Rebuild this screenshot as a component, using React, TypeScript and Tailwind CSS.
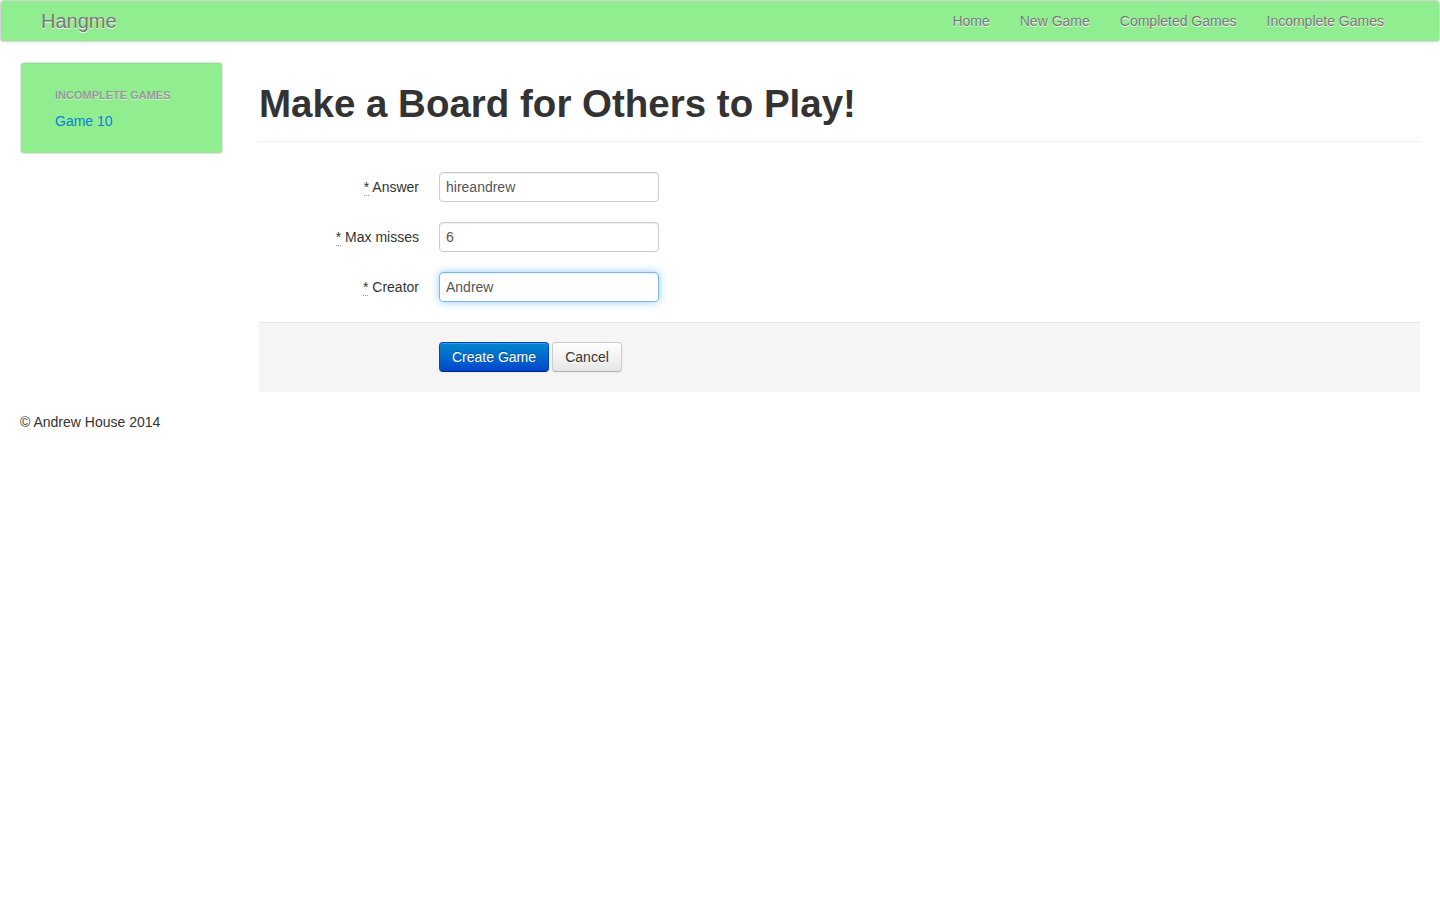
import React from 'react';

const navLinks = ['Home', 'New Game', 'Completed Games', 'Incomplete Games'];

const fields = [
  { label: 'Answer', value: 'hireandrew', focused: false },
  { label: 'Max misses', value: '6', focused: false },
  { label: 'Creator', value: 'Andrew', focused: true },
];

const App = () => {
  return (
    <div className="min-h-screen bg-white text-[14px] leading-[20px] text-[#333]" style={{ fontFamily: '"Liberation Sans", Arial, sans-serif' }}>
      {/* Navbar */}
      <div className="h-[42px] bg-[#90ee90] border border-[#d4d4d4] rounded-[4px] shadow-[0_1px_4px_rgba(0,0,0,0.065)] px-[40px] flex items-center justify-between">
        <a className="text-[20px] leading-[20px] text-[#777] [text-shadow:0_1px_0_#fff] font-light">Hangme</a>
        <ul className="flex">
          {navLinks.map((link) => (
            <li key={link}>
              <a className="block px-[15px] py-[10px] text-[#777] [text-shadow:0_1px_0_#fff]">{link}</a>
            </li>
          ))}
        </ul>
      </div>

      <div className="px-[20px] pt-[20px]">
        <div className="flex items-start">
          {/* Sidebar */}
          <div className="w-[203px] shrink-0 bg-[#90ee90] border border-[#e3e3e3] rounded-[4px] shadow-[inset_0_1px_1px_rgba(0,0,0,0.05)] py-[19px] px-[19px]">
            <ul className="px-[15px]">
              <li className="py-[3px] text-[11px] font-bold uppercase text-[#999] [text-shadow:0_1px_0_rgba(255,255,255,0.5)]">Incomplete Games</li>
              <li className="py-[3px]">
                <a className="text-[#0a80d8]">Game 10</a>
              </li>
            </ul>
          </div>

          {/* Main */}
          <div className="flex-1 ml-[36px]">
            <div className="border-b border-[#eee] pb-[17px] mt-[22px] mb-[30px]">
              <h1 className="text-[38.5px] leading-[40px] font-bold text-[#333]">Make a Board for Others to Play!</h1>
            </div>

            <form>
              {fields.map((f) => (
                <div key={f.label} className="flex mb-[20px]">
                  <label className="w-[160px] pt-[5px] text-right">
                    <abbr className="no-underline border-b border-dotted border-[#999] cursor-help" title="required">*</abbr> {f.label}
                  </label>
                  <div className="ml-[20px]">
                    <input
                      readOnly
                      value={f.value}
                      className={`w-[220px] h-[30px] px-[6px] py-[4px] text-[14px] text-[#555] rounded-[4px] border outline-none ${
                        f.focused
                          ? 'border-[rgba(82,168,236,0.8)] shadow-[inset_0_1px_1px_rgba(0,0,0,0.075),0_0_8px_rgba(82,168,236,0.6)]'
                          : 'border-[#ccc] shadow-[inset_0_1px_1px_rgba(0,0,0,0.075)]'
                      }`}
                    />
                  </div>
                </div>
              ))}

              <div className="bg-[#f5f5f5] border-t border-[#e5e5e5] pt-[19px] pb-[20px] pl-[180px] flex gap-[3px]">
                <button
                  type="button"
                  className="w-[110px] h-[30px] rounded-[4px] text-white text-[14px] bg-gradient-to-b from-[#0088cc] to-[#0044cc] border border-[#0044cc] border-b-[#002a80] [text-shadow:0_-1px_0_rgba(0,0,0,0.25)] shadow-[inset_0_1px_0_rgba(255,255,255,0.2),0_1px_2px_rgba(0,0,0,0.05)]"
                >
                  Create Game
                </button>
                <button
                  type="button"
                  className="w-[70px] h-[30px] rounded-[4px] text-[#333] text-[14px] bg-gradient-to-b from-white to-[#e6e6e6] border border-[#ccc] border-b-[#b3b3b3] [text-shadow:0_1px_1px_rgba(255,255,255,0.75)] shadow-[inset_0_1px_0_rgba(255,255,255,0.2),0_1px_2px_rgba(0,0,0,0.05)]"
                >
                  Cancel
                </button>
              </div>
            </form>
          </div>
        </div>

        <footer className="mt-[20px]">
          <p>© Andrew House 2014</p>
        </footer>
      </div>
    </div>
  );
};

export default App;
